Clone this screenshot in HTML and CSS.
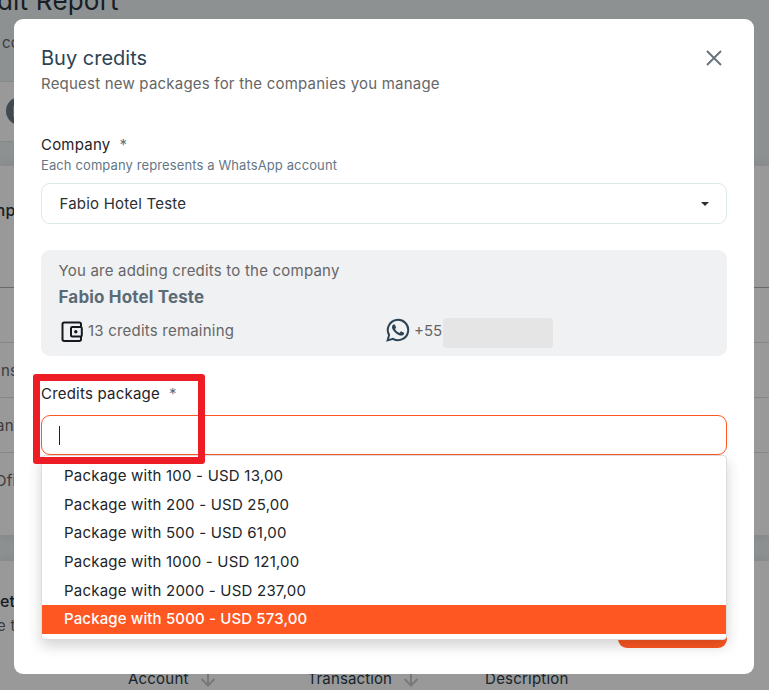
FILE: index.html
```html
<!DOCTYPE html>
<html lang="en">
<head>
<meta charset="utf-8">
<title>Buy credits</title>
<link rel="stylesheet" href="styles.css">
</head>
<body>
<main class="page">
  <header class="page-head">
    <h1>dit Report</h1>
    <p class="page-sub">co</p>
  </header>
  <section class="filter"><span class="avatar"><i></i></span></section>
  <section class="card report">
    <h2>mp</h2>
    <div class="row first"></div>
    <div class="row"><span class="ns">ns</span></div>
    <div class="row"><span class="ant">ant</span></div>
    <div class="row last"><span class="ofi">Ofi</span></div>
  </section>
  <section class="card details">
    <h2>et</h2>
    <p>e t</p>
    <div class="columns">
      <span class="account">Account</span><svg class="sort" viewBox="0 0 16 16"><path d="M8 0v14M1.500 8 8 14.500 14.500 8"/></svg>
      <span class="transaction">Transaction</span><svg class="sort" viewBox="0 0 16 16"><path d="M8 0v14M1.500 8 8 14.500 14.500 8"/></svg>
      <span class="description">Description</span>
    </div>
  </section>
</main>
<div class="overlay">
  <div class="modal" role="dialog">
    <header class="modal-head">
      <div>
        <h2 class="title">Buy credits</h2>
        <p class="subtitle">Request new packages for the companies you manage</p>
      </div>
      <svg class="close" viewBox="0 0 16 16"><path d="M1 1l14 14M15 1 1 15"/></svg>
    </header>
    <div class="label company">Company<span class="star">*</span></div>
    <div class="hint">Each company represents a WhatsApp account</div>
    <div class="select"><span>Fabio Hotel Teste</span><i class="caret"></i></div>
    <section class="info">
      <p class="adding">You are adding credits to the company</p>
      <p class="name">Fabio Hotel Teste</p>
      <div class="facts">
        <div class="fact">
          <svg class="wallet" viewBox="0 0 22 22"><path d="M20 5.500V3.200Q20 1.500 18.300 1.500H3.200Q1.500 1.500 1.500 3.200V18.300Q1.500 20 3.200 20H18.300Q20 20 20 18.300V16"/><rect x="10" y="6" width="10.800" height="9.500" rx="1.200"/><circle cx="14.800" cy="10.700" r="1.700"/></svg>
          <span>13 credits remaining</span>
        </div>
        <div class="fact">
          <svg class="whatsapp" viewBox="0 0 24 24"><path d="M17.472 14.382c-.297-.149-1.758-.867-2.030-.967-.273-.099-.471-.148-.670.150-.197.297-.767.966-.940 1.164-.173.199-.347.223-.644.075-.297-.150-1.255-.463-2.390-1.475-.883-.788-1.480-1.761-1.653-2.059-.173-.297-.018-.458.130-.606.134-.133.298-.347.446-.520.149-.174.198-.298.298-.497.099-.198.050-.371-.025-.520-.075-.149-.669-1.612-.916-2.207-.242-.579-.487-.500-.669-.510-.173-.008-.371-.010-.570-.010-.198 0-.520.074-.792.372-.272.297-1.040 1.016-1.040 2.479 0 1.462 1.065 2.875 1.213 3.074.149.198 2.096 3.200 5.077 4.487.709.306 1.262.489 1.694.625.712.227 1.360.195 1.871.118.571-.085 1.758-.719 2.006-1.413.248-.694.248-1.289.173-1.413-.074-.124-.272-.198-.570-.347"/><path class="bubble" d="M1.600 22.400 3.100 17A10.200 10.200 0 1 1 7 20.900Z"/></svg>
          <span class="phone">+55</span><span class="redacted"></span>
        </div>
      </div>
    </section>
    <div class="label package">Credits package<span class="star">*</span></div>
    <div class="field">
      <div class="input"><i class="cursor"></i></div>
      <ul class="menu">
        <li>Package with 100 - USD 13,00</li>
        <li>Package with 200 - USD 25,00</li>
        <li>Package with 500 - USD 61,00</li>
        <li>Package with 1000 - USD 121,00</li>
        <li>Package with 2000 - USD 237,00</li>
        <li class="active">Package with 5000 - USD 573,00</li>
      </ul>
    </div>
    <div class="actions"><span class="submit"></span></div>
    <div class="highlight"></div>
  </div>
</div>
</body>
</html>
```
FILE: styles.css
```css
* { box-sizing: border-box; }
html, body { height: 100%; }
body { margin: 0; overflow: hidden; font: 15px/20px Inter, "Liberation Sans", sans-serif; letter-spacing: .21px; color: #2b2f33; background: #edf2f4; }
h1, h2, p, ul { margin: 0; padding: 0; }
li { list-style: none; }

.page { height: 690px; overflow: hidden; display: flex; flex-direction: column; }
.page-head { height: 81px; flex: none; }
.page-head h1 { font-size: 26px; font-weight: 400; line-height: 32px; margin: -15px 0 0 -3px; color: #28333e; letter-spacing: .2px; }
.page-sub { margin: 16px 0 0 2px; color: #666; }
.filter { height: 61px; width: 600px; flex: none; background: #fff; border: 1px solid #dfe4e6; border-left: 0; padding: 15px 6px; }
.avatar { display: flex; align-items: center; justify-content: center; width: 28px; height: 28px; border-radius: 50%; background: #6f7c87; }
.avatar i { width: 14px; height: 11px; background: #aab4bb; }
.card { background: #fff; flex: none; box-shadow: 0 0 12px rgba(90, 80, 110, .15); }
.report { margin-top: 24px; height: 369px; }
.card h2 { font-size: 16px; font-weight: 500; line-height: 22px; color: #27343d; }
.report h2 { padding-top: 33px; height: 121px; margin-left: -9px; }
.row { height: 55px; border-top: 1px solid #e2e2e2; padding-top: 18px; color: #666; overflow: hidden; }
.row.first { border-color: #b0b0b0; }
.row.last { height: 82px; }
.ns { margin-left: 1px; }
.ant { margin-left: -4px; }
.ofi { margin-left: -5px; }
.details { margin-top: 26px; height: 150px; }
.details h2 { padding-top: 29px; }
.details p { margin: 4px 0 0 -3px; color: #666; }
.columns { display: flex; align-items: center; margin: 33px 0 0 128px; color: #2b3c48; }
.sort { width: 16px; height: 16px; margin-left: 11px; fill: none; stroke: #c8cacc; stroke-width: 2; }
.transaction { margin-left: 92px; letter-spacing: .13px; }
.description { margin-left: 66px; }

.overlay { position: fixed; inset: 0; padding: 19px 15px 16px 14px; background: rgba(0, 0, 0, .4); }
.modal { position: relative; height: 655px; background: #fff; border-radius: 9px; padding: 27px; display: flex; flex-direction: column; }
.modal-head { display: flex; justify-content: space-between; }
.title { font-size: 20px; line-height: 24px; font-weight: 400; color: #2c4353; letter-spacing: 0; }
.subtitle { margin-top: 4px; color: #666; }
.close { width: 16px; height: 16px; margin: 4px 5px 0 0; fill: none; stroke: #66727c; stroke-width: 1.900; }
.label { color: #1f2327; }
.star { color: #5b7282; margin-left: 9px; }
.company { margin-top: 41px; }
.hint { font-size: 13px; letter-spacing: .11px; color: #657786; }
.select { height: 41px; margin-top: 8px; border: 1px solid #dce8e7; border-radius: 9px; padding: 1px 17px 0 17.500px; display: flex; flex: none; align-items: center; justify-content: space-between; }
.caret { border: 4px solid transparent; border-top-color: #2b2f33; border-bottom: 0; }
.info { height: 106px; flex: none; margin-top: 26px; padding: 11px 17.500px; background: #f0f1f3; border-radius: 9px; color: #666; }
.name { font-size: 17px; font-weight: 700; line-height: 24px; margin-top: 4px; color: #5b6b76; letter-spacing: .16px; }
.facts { display: grid; grid-template-columns: 325px 1fr; margin-top: 7px; }
.fact { display: flex; align-items: center; height: 30px; }
.wallet { width: 22px; height: 22px; margin: 2px 5px 0 2.500px; fill: none; stroke: #15191d; stroke-width: 2; }
.wallet circle { fill: #15191d; stroke: none; }
.whatsapp { width: 24px; height: 24px; margin: -2px 4.500px 0 2px; fill: #2c4353; }
.whatsapp .bubble { fill: none; stroke: #2c4353; stroke-width: 2; }
.phone { letter-spacing: 0; }
.redacted { width: 110px; height: 30px; margin: 3px 0 0 .5px; border-radius: 4px; background: #e5e5e5; }
.package { margin-top: 28px; }
.field { position: relative; margin-top: 11px; }
.input { height: 40px; border: 1px solid #ff5722; border-radius: 9px; padding: 10px 17px; }
.cursor { display: block; width: 1px; height: 19px; background: #222; }
.menu { position: absolute; top: 40px; left: 0; width: 686px; height: 185px; padding: 6px 0 5px; background: #fff; border: 1px solid #ddd; border-radius: 4px; box-shadow: 0 6px 14px rgba(0, 0, 0, .175); }
.menu li { height: 28.700px; line-height: 28.700px; padding-left: 22px; color: #212529; }
.menu .active { background: #ff5722; color: #fff; font-weight: 500; letter-spacing: .14px; }
.actions { display: flex; justify-content: flex-end; margin-top: 153px; }
.submit { width: 109px; height: 40px; border-radius: 9px; background: #ff5722; }
.highlight { position: absolute; left: 19px; top: 355px; width: 172px; height: 90px; border: 7px solid #ee1c25; border-radius: 3px; }
```
